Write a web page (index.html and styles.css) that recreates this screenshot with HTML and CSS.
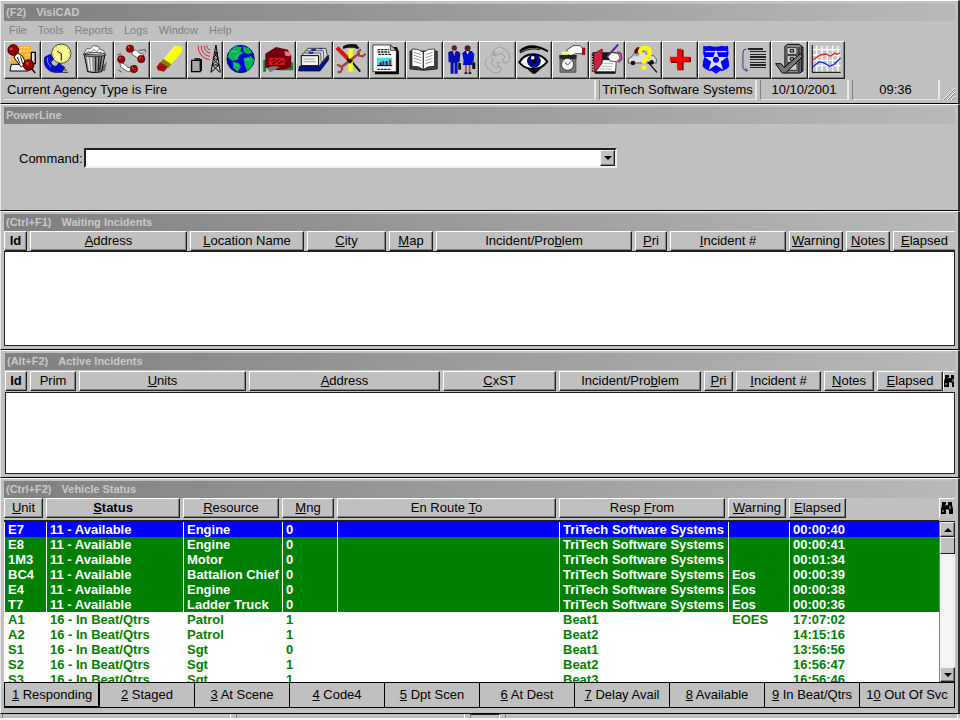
FILE: index.html
```
<!DOCTYPE html>
<html lang="en">
<head>
<meta charset="UTF-8">
<meta name="viewport" content="width=device-width, initial-scale=1.0">
<title>VisiCAD</title>
<link rel="stylesheet" href="styles.css">
</head>
<body>

<!-- Main window -->
<header class="window">
  <h1 class="title-bar"><span>(F2)</span><span>VisiCAD</span></h1>
  <nav class="menu">
    <button>File</button>
    <button>Tools</button>
    <button>Reports</button>
    <button>Logs</button>
    <button>Window</button>
    <button>Help</button>
  </nav>
  <div class="toolbar">
    <button aria-label="Emergency call">
      <svg viewBox="0 0 102 102"><path fill="#ffb030" d="M26 8h50l8 22v32H16V24z"/><path stroke="#fff080" stroke-width="4" stroke-dasharray="5 5" d="M36 14h40M34 24h46M12 40l14-6M12 52l14-4M60 36h22"/><path fill="#eee" stroke="#000" stroke-width="3" d="M18 64h50v20H14z"/><path fill="#ddd" stroke="#000" stroke-width="4" d="M78 28h12v34H78z"/><path fill="#fff" stroke="#000" stroke-width="3" d="M34 28l18 12 10 20-14 12-22-28z"/><path stroke="#222" stroke-width="3" d="M36 42l8 20M46 40l6 22"/><circle cx="24" cy="21" r="16" fill="#900000" stroke="#300" stroke-width="3"/><circle cx="70" cy="66" r="16" fill="#900000" stroke="#300" stroke-width="3"/><path stroke="#000" stroke-width="4" d="M80 78l10 12"/><path fill="#e04040" d="M14 14h8v7h-8zM62 58h8v7h-8z"/></svg>
    </button>
    <button aria-label="Scheduled call">
      <svg viewBox="0 0 102 102"><circle cx="57" cy="32" r="29" fill="#ffff90" stroke="#000" stroke-width="2"/><circle cx="57" cy="32" r="24" fill="none" stroke="#a08020" stroke-width="3" stroke-dasharray="3 9"/><path fill="none" stroke="#000" stroke-width="3" d="M45 25l12 7v20"/><path fill="#0010d0" stroke="#000060" stroke-width="2" d="M8 42l16-8 10 14-8 10c2 8 8 12 16 12l8-10 18 14-8 12c-32 10-62-10-52-44z"/><path stroke="#70a0ff" stroke-width="3" d="M16 44v14l10 14"/><path stroke="#333" stroke-width="3" d="M56 88h22M66 81h8"/></svg>
    </button>
    <button aria-label="Trash">
      <svg viewBox="0 0 102 102"><path fill="#666" d="M62 84h18l6-30z"/><path fill="#999" stroke="#000" stroke-width="3" d="M18 34h62l-10 52q-22 6-42 0z"/><path stroke="#222" stroke-width="4" d="M52 40v46M62 40l-2 44M70 40l-6 42"/><path stroke="#eee" stroke-width="4" d="M28 40l6 42M38 40l3 44"/><path fill="#fff" stroke="#222" stroke-width="2" d="M16 34l10-18 10 2 8-10 16 2 6 10 10 2 4 14z"/><path fill="none" stroke="#555" stroke-width="2" d="M28 22l10 8 8-12 10 8 6-10M22 32l8-6M64 32l6-6"/><ellipse cx="49" cy="35" rx="34" ry="6" fill="none" stroke="#333" stroke-width="3"/></svg>
    </button>
    <button aria-label="Transfer calls">
      <svg viewBox="0 0 102 102"><path fill="#fff" stroke="#222" stroke-width="2" d="M50 26l12-6 10 10 14 4-4 14-16-4-16-10zM14 58l12 4 12 12 14-2-2 12-12 2-22-14z"/><g fill="#a00000" stroke="#300" stroke-width="2"><circle cx="44" cy="17" r="11"/><circle cx="78" cy="48" r="11"/><circle cx="18" cy="49" r="11"/><circle cx="56" cy="78" r="11"/></g><g fill="#e05050"><circle cx="40" cy="13" r="3"/><circle cx="74" cy="44" r="3"/><circle cx="14" cy="45" r="3"/><circle cx="52" cy="74" r="3"/></g><path stroke="#222" stroke-width="2" d="M70 22l20-2 2 8M6 36l12-4M8 80l12 8"/></svg>
    </button>
    <button aria-label="Erase">
      <svg viewBox="0 0 102 102"><path fill="#ffff00" d="M38 48L72 8l22 4-2 14-32 38z"/><path fill="#808000" d="M36 48l24 16-8 10-26-14z"/><path fill="#a01010" d="M26 58l24 14-12 14-18-4-4-10z"/><path stroke="#fff" stroke-width="2" d="M40 46l32-38"/></svg>
    </button>
    <button aria-label="Radio tower">
      <svg viewBox="0 0 102 102"><path fill="#aaa" stroke="#000" stroke-width="4" d="M10 52h26v34H10z"/><path fill="#000" d="M36 48h5v36h-5zM18 46h18v4H18z"/><path fill="none" stroke="#e02020" stroke-width="3" d="M56 8a10 10 0 0 0 10 12M48 8a20 20 0 0 0 18 22M39 8a29 29 0 0 0 26 32M30 8a38 38 0 0 0 34 42"/><path fill="none" stroke="#000" stroke-width="3" d="M83 6L68 88M83 6l13 82M78 28h10M74 48h16M70 66h24M78 28l12 20-18 18 22 22M88 28L74 48l18 18-24 22"/></svg>
    </button>
    <button aria-label="Map">
      <svg viewBox="0 0 102 102"><circle cx="49" cy="48" r="41" fill="#0000e0" stroke="#002040" stroke-width="3"/><path fill="#10b050" d="M16 24l18-14 20 2-6 12 10 6-14 8-4 12-16 4-14-12zM56 10l18 6 10 14-14 4-12-8zM58 46l22-6 10 10-8 24-14 10-6-16zM26 56l18 4 6 12-10 14-14-12z"/><path stroke="#20e0a0" stroke-width="3" d="M22 26h18M34 44l12-12M64 50h16M32 62l10 8"/></svg>
    </button>
    <button aria-label="Station">
      <svg viewBox="0 0 102 102"><path fill="#108030" d="M6 50h8v36H6zM54 82h42V58h-6v18H54z"/><path fill="#700010" d="M12 32l32-20 36 8 10 20v34l-40 8-38-8z"/><path fill="#e01010" d="M24 44h46v24H22z"/><path stroke="#400" stroke-width="4" d="M30 54l12-6M34 62l20-12M50 62l16-8"/><path fill="#ff7080" d="M70 24l18 4-2 12-14-2z"/><path fill="#777" d="M18 76l20-10 18 6-30 16z"/><path stroke="#000" stroke-width="3" d="M20 68h46"/></svg>
    </button>
    <button aria-label="Card file">
      <svg viewBox="0 0 102 102"><path fill="#0010a0" stroke="#000" stroke-width="2" d="M6 70h60l28-34v14L68 84H4z"/><path fill="#ddd" stroke="#000" stroke-width="2" d="M14 36l18-20h54l4 22-24 30z"/><path fill="#f4f4f4" stroke="#000" stroke-width="3" d="M12 38h52v30H12z"/><path fill="none" stroke="#222" stroke-width="2" d="M20 30h50l2 32M26 23h52l2 32"/><path fill="#1020b0" d="M42 17h14v6H42zM34 26h14v6H34zM66 15h10v4H66z"/><path stroke="#777" stroke-width="2" d="M18 48h34M18 56h38"/></svg>
    </button>
    <button aria-label="Tools">
      <svg viewBox="0 0 102 102"><path stroke="#111" stroke-width="6" d="M44 46l34 40"/><path stroke="#e01010" stroke-width="12" d="M8 14l34 34"/><path stroke="#ffff00" stroke-width="13" d="M49 18v68"/><path fill="#111" d="M26 10q14-10 40-6l10 12-8 2-8-4H40l-14 4z"/><path fill="none" stroke="#a04040" stroke-width="8" d="M22 72l54-42"/><path fill="none" stroke="#a04040" stroke-width="6" d="M80 20l-8 6 2 12 12 2 8-8M8 66l10 2 6 10-6 10-8-2"/><path fill="#111" d="M38 44l18 8-8 10-10-8z"/></svg>
    </button>
    <button aria-label="Report">
      <svg viewBox="0 0 102 102"><path fill="#000" d="M14 12h66l6 14v68H14z"/><path fill="#fff" stroke="#000" stroke-width="2" d="M8 6h52l18 16v64H8z"/><path fill="#bbb" stroke="#000" stroke-width="2" d="M60 6v16h18z"/><path stroke="#222" stroke-width="4" stroke-dasharray="8 2" d="M22 20h34M22 27h36M24 34h38M22 79h40"/><path fill="#40e0e0" d="M20 44h46v24H20z"/><path fill="#0020a0" d="M28 58h6v10h-6zM46 54h6v14h-6z"/><path fill="#d01010" d="M36 54h6v14h-6zM56 50h6v18h-6z"/><path stroke="#000" stroke-width="3" d="M20 68h46"/></svg>
    </button>
    <button aria-label="Reference book">
      <svg viewBox="0 0 102 102"><path fill="#444" stroke="#000" stroke-width="2" d="M8 24h82v54l-40 4-42-4z"/><path fill="#fff" stroke="#000" stroke-width="2" d="M14 18q20-2 34 10 14-12 34-10v52q-20-2-34 10-14-12-34-10z"/><path stroke="#000" stroke-width="3" d="M48 28v52"/><path stroke="#666" stroke-width="2" d="M20 28l22 7M20 37l22 7M20 46l22 7M20 55l22 7M54 35l22-7M54 44l22-7M54 53l22-7M54 62l22-7"/></svg>
    </button>
    <button aria-label="Personnel">
      <svg viewBox="0 0 102 102"><path fill="#0010b0" d="M12 28l8-4h20l8 6-2 28h-6v34H31V60h-3v32h-9V58h-6z"/><path fill="#0010c8" d="M54 30l8-6h20l8 8-2 24h-4l2 10H56l2-12z"/><circle cx="30" cy="15" r="8" fill="#602020"/><circle cx="70" cy="16" r="9" fill="#502020"/><path fill="#fff" d="M26 25h8l-4 14zM66 25h8l-4 10z"/><path stroke="#d01010" stroke-width="2" d="M30 27v10"/><path stroke="#a05040" stroke-width="5" d="M65 66v24M76 66v24"/><path fill="#111" d="M42 60h8v20h-8zM84 58h9v20h-9zM61 88h8v5h-8zM73 88h8v5h-8z"/></svg>
    </button>
    <button aria-label="Redial" disabled>
      <svg viewBox="0 0 102 102"><path fill="none" stroke="#8a8a8a" stroke-width="2" d="M42 22l10-8 16 2 16 12 6 18-8 12-12 2-4-10 8-8-10-12-10 4-10 4zM18 48l12-6 8 8-6 12 14 14 10-6 8 6-4 10-18 4-20-14-8-14z"/><path fill="none" stroke="#8a8a8a" stroke-width="2" d="M34 28l8 8M38 24l2 12-10 0M60 60l-8-2 2 12"/><path fill="none" stroke="#e4e4e4" stroke-width="2" d="M45 25l9-8 14 2M21 51l11-6"/></svg>
    </button>
    <button aria-label="View">
      <svg viewBox="0 0 102 102"><path fill="#000" d="M6 22Q40-8 92 22v6Q46 2 8 28z"/><path stroke="#000" stroke-width="3" d="M8 30q30-18 60-10"/><path fill="#fff" stroke="#000" stroke-width="6" d="M6 58q14-24 42-24 26 0 42 22-16 22-42 22Q22 78 6 58z"/><circle cx="50" cy="54" r="19" fill="#0000b0" stroke="#000" stroke-width="3"/><circle cx="51" cy="52" r="9" fill="#000"/><path fill="#fff" d="M42 40h9v9h-9z"/><path fill="#000" d="M28 76q20 10 46-2L54 92h-8z"/></svg>
    </button>
    <button aria-label="Time stamp">
      <svg viewBox="0 0 102 102"><path fill="#fff" stroke="#000" stroke-width="2" d="M42 20l18-12h20l8 8v16H68l-16 6-12-8z"/><path fill="#a01020" d="M86 14h10v22H86z"/><path fill="#ffff60" d="M26 26h22v8H26z"/><path fill="#222" d="M18 36h52v12H18z"/><path fill="#777" stroke="#444" stroke-width="2" d="M20 48h48v40H20z"/><circle cx="43" cy="64" r="18" fill="#fff" stroke="#000" stroke-width="2"/><path fill="none" stroke="#2030d0" stroke-width="3" d="M34 58l9 8 10-10"/></svg>
    </button>
    <button aria-label="Write log">
      <svg viewBox="0 0 102 102"><path fill="#111" d="M6 28h70v64H14z"/><path fill="#d02040" stroke="#500" stroke-width="2" d="M10 32l26-14v52L12 88z"/><path fill="#fff" stroke="#000" stroke-width="2" d="M36 50h42l-2 36H16l20-26z"/><path stroke="#888" stroke-width="2" d="M40 62h28M34 70h32M28 78h36"/><path fill="#fff" stroke="#000" stroke-width="2" d="M50 38l14-10 20 4 6 14-12 10-18-2z"/><path fill="none" stroke="#a02080" stroke-width="5" d="M80 26l12 6 2 16-10 10"/><path stroke="#602080" stroke-width="6" d="M84 4L48 44"/><path stroke="#111" stroke-width="5" stroke-dasharray="4 4" d="M7 34v54"/></svg>
    </button>
    <button aria-label="Find vehicle">
      <svg viewBox="0 0 102 102"><path fill="#ddd" stroke="#222" stroke-width="2" d="M6 48l12-8 8-14h28l10 12h18l8 10v12H6z"/><path fill="#8ab" d="M28 30h10v10H22zM56 40h14v8H56z"/><circle cx="20" cy="60" r="7" fill="#111"/><circle cx="76" cy="58" r="7" fill="#111"/><path fill="#600" d="M24 22l10-10 14 4-6 14-16 2z"/><path stroke="#000" stroke-width="4" d="M64 56l28 32"/><path fill="none" stroke="#ffff00" stroke-width="12" d="M40 30q2-17 16-16 18 2 15 18-2 8-12 14-6 4-6 16"/><path fill="#ffff00" d="M46 68h14v12H46z"/></svg>
    </button>
    <button aria-label="Medical">
      <svg viewBox="0 0 102 102"><path fill="#700" d="M43 20h18v22h22v16H61v24H43V60H23V42h20z"/><path fill="#f00" d="M41 17h15v24h23v14H56v24H41V55H20V41h21z"/></svg>
    </button>
    <button aria-label="Police">
      <svg viewBox="0 0 102 102"><path fill="#0000ff" d="M12 8q10 4 18 0 18 6 38 0 8 4 18 0l2 26q-6 8 0 18l2 18q-10 14-28 14L50 92 38 84q-18 0-28-14l2-18q6-10 0-18z"/><path fill="none" stroke="#fff" stroke-width="3" d="M18 26h64"/><path fill="#dde" d="M50 20l8 22h26L64 56l8 24-22-14-22 14 8-24-20-14h26z"/><circle cx="50" cy="50" r="9" fill="#0000ff"/></svg>
    </button>
    <button aria-label="List">
      <svg viewBox="0 0 102 102"><path fill="none" stroke="#334090" stroke-width="3" d="M30 18q-10 0-10 12v44q0 8 12 8M26 76l8 6-6 4"/><path shape-rendering="crispEdges" stroke="#222" stroke-width="4" d="M36 18h44M40 26h48M40 34h48M40 42h48M40 50h48M40 58h48M40 66h48M40 74h48"/></svg>
    </button>
    <button aria-label="File check">
      <svg viewBox="0 0 102 102"><path fill="#888" stroke="#000" stroke-width="3" d="M38 10l8-6h34l12 8v72l-10 6H38z"/><path fill="#ccc" stroke="#000" stroke-width="2" d="M44 14h30v20H44zM44 38h30v20H44zM44 62h30v20H44z"/><path fill="none" stroke="#000" stroke-width="3" d="M54 20h10v7H54zM54 44h10v7H54zM80 12v76M87 12v74"/><path fill="#777" stroke="#000" stroke-width="3" d="M10 62h16l10 12L84 32l8 8-52 50H30z"/></svg>
    </button>
    <button aria-label="Charts">
      <svg viewBox="0 0 102 102"><path fill="#c8c8c8" d="M10 8h84v80H10z"/><path stroke="#fff" stroke-width="4" d="M22 8v78M38 8v78M54 8v78M70 8v78M86 8v78M8 20h86M8 36h86M8 52h86M8 68h86"/><path fill="none" stroke="#000" stroke-width="3" d="M9 6v82h85"/><path fill="none" stroke="#f02020" stroke-width="4" d="M10 52l22-16 18-3 14 6 12-8 8 3 8-4"/><path fill="none" stroke="#1020f0" stroke-width="4" d="M10 72l20-16 16 4 14 10 12-4 22-20"/></svg>
    </button>
  </div>
  <div class="status-bar">
    <span class="status-text">Current Agency Type is Fire</span>
    <span class="status-company">TriTech Software Systems</span>
    <span class="status-date">10/10/2001</span>
    <span class="status-time">09:36</span>
    <svg class="grip" viewBox="0 0 12 12"><path stroke="#fff" d="M0 12L12 0M4 12l8-8M8 12l4-4"/><path stroke="#808080" d="M1 12L12 1M5 12l7-7M9 12l3-3"/></svg>
  </div>
</header>

<!-- Command line -->
<section class="window powerline">
  <h2 class="title-bar"><span>PowerLine</span></h2>
  <form class="command">
    <label for="command">Command:</label>
    <div class="combo">
      <select id="command"><option></option></select>
      <span class="combo-arrow arrow-down"></span>
    </div>
  </form>
</section>

<section class="window waiting">
  <h2 class="title-bar"><span>(Ctrl+F1)</span><span>Waiting Incidents</span></h2>
  <table>
    <colgroup>
      <col class="w-id"><col class="w-address"><col class="w-location"><col class="w-city"><col class="w-map"><col class="w-problem"><col class="w-pri"><col class="w-incident"><col class="w-warning"><col class="w-notes"><col class="w-elapsed">
    </colgroup>
    <thead>
      <tr>
        <th><button class="sorted">Id</button></th>
        <th><button><u>A</u>ddress</button></th>
        <th><button><u>L</u>ocation Name</button></th>
        <th><button><u>C</u>ity</button></th>
        <th><button><u>M</u>ap</button></th>
        <th><button>Incident/Pro<u>b</u>lem</button></th>
        <th><button><u>P</u>ri</button></th>
        <th><button><u>I</u>ncident #</button></th>
        <th><button><u>W</u>arning</button></th>
        <th><button><u>N</u>otes</button></th>
        <th><button><u>E</u>lapsed</button></th>
      </tr>
    </thead>
    <tbody>
      <tr><td class="empty" colspan="11"></td></tr>
    </tbody>
  </table>
</section>

<section class="window active">
  <h2 class="title-bar"><span>(Alt+F2)</span><span>Active Incidents</span></h2>
  <table>
    <colgroup>
      <col class="a-id"><col class="a-prim"><col class="a-units"><col class="a-address"><col class="a-cross"><col class="a-problem"><col class="a-pri"><col class="a-incident"><col class="a-notes"><col class="a-elapsed"><col class="a-find">
    </colgroup>
    <thead>
      <tr>
        <th><button class="sorted">Id</button></th>
        <th><button>Prim</button></th>
        <th><button><u>U</u>nits</button></th>
        <th><button><u>A</u>ddress</button></th>
        <th><button><u>C</u>xST</button></th>
        <th><button>Incident/Pro<u>b</u>lem</button></th>
        <th><button><u>P</u>ri</button></th>
        <th><button><u>I</u>ncident #</button></th>
        <th><button><u>N</u>otes</button></th>
        <th><button><u>E</u>lapsed</button></th>
        <th><button class="find" aria-label="Find"><svg viewBox="0 0 12 14"><path d="M1 1h4v3h2V1h4v3l1 4v5H8V9L6 8 5 9v4H0V8l1-4z"/><path stroke="#c0c0c0" d="M2 9v2M9 5v3M4 4h1"/></svg></button></th>
      </tr>
    </thead>
    <tbody>
      <tr><td class="empty" colspan="11"></td></tr>
    </tbody>
  </table>
</section>

<section class="window vehicles">
  <h2 class="title-bar"><span>(Ctrl+F2)</span><span>Vehicle Status</span></h2>
  <div class="vehicle-list">
    <div class="vehicle-view">
      <table>
        <colgroup>
          <col class="v-unit"><col class="v-status"><col class="v-resource"><col class="v-mng"><col class="v-route"><col class="v-from"><col class="v-warning"><col class="v-elapsed"><col class="v-rest">
        </colgroup>
        <thead>
          <tr>
            <th><button><u>U</u>nit</button></th>
            <th><button class="sorted"><u>S</u>tatus</button></th>
            <th><button><u>R</u>esource</button></th>
            <th><button><u>M</u>ng</button></th>
            <th><button>En Route <u>T</u>o</button></th>
            <th><button>Resp <u>F</u>rom</button></th>
            <th><button><u>W</u>arning</button></th>
            <th><button><u>E</u>lapsed</button></th>
            <th></th>
          </tr>
        </thead>
        <tbody>
          <tr class="available selected"><td>E7</td><td>11 - Available</td><td>Engine</td><td>0</td><td></td><td>TriTech Software Systems</td><td></td><td colspan="2">00:00:40</td></tr>
          <tr class="available"><td>E8</td><td>11 - Available</td><td>Engine</td><td>0</td><td></td><td>TriTech Software Systems</td><td></td><td colspan="2">00:00:41</td></tr>
          <tr class="available"><td>1M3</td><td>11 - Available</td><td>Motor</td><td>0</td><td></td><td>TriTech Software Systems</td><td></td><td colspan="2">00:01:34</td></tr>
          <tr class="available"><td>BC4</td><td>11 - Available</td><td>Battalion Chief</td><td>0</td><td></td><td>TriTech Software Systems</td><td>Eos</td><td colspan="2">00:00:39</td></tr>
          <tr class="available"><td>E4</td><td>11 - Available</td><td>Engine</td><td>0</td><td></td><td>TriTech Software Systems</td><td>Eos</td><td colspan="2">00:00:38</td></tr>
          <tr class="available"><td>T7</td><td>11 - Available</td><td>Ladder Truck</td><td>0</td><td></td><td>TriTech Software Systems</td><td>Eos</td><td colspan="2">00:00:36</td></tr>
          <tr><td>A1</td><td>16 - In Beat/Qtrs</td><td>Patrol</td><td>1</td><td></td><td>Beat1</td><td>EOES</td><td colspan="2">17:07:02</td></tr>
          <tr><td>A2</td><td>16 - In Beat/Qtrs</td><td>Patrol</td><td>1</td><td></td><td>Beat2</td><td></td><td colspan="2">14:15:16</td></tr>
          <tr><td>S1</td><td>16 - In Beat/Qtrs</td><td>Sgt</td><td>0</td><td></td><td>Beat1</td><td></td><td colspan="2">13:56:56</td></tr>
          <tr><td>S2</td><td>16 - In Beat/Qtrs</td><td>Sgt</td><td>1</td><td></td><td>Beat2</td><td></td><td colspan="2">16:56:47</td></tr>
          <tr><td>S3</td><td>16 - In Beat/Qtrs</td><td>Sgt</td><td>1</td><td></td><td>Beat3</td><td></td><td colspan="2">16:56:46</td></tr>
        </tbody>
      </table>
    </div>
    <div class="side">
      <button class="find" aria-label="Find"><svg viewBox="0 0 12 14"><path d="M1 1h4v3h2V1h4v3l1 4v5H8V9L6 8 5 9v4H0V8l1-4z"/><path stroke="#c0c0c0" d="M2 9v2M9 5v3M4 4h1"/></svg></button>
      <div class="scrollbar">
        <button class="arrow-up" aria-label="Scroll up"></button>
        <div class="thumb"></div>
        <button class="arrow-down" aria-label="Scroll down"></button>
      </div>
    </div>
  </div>
  <div class="status-buttons">
    <button class="default"><u>1</u> Responding</button>
    <button><u>2</u> Staged</button>
    <button><u>3</u> At Scene</button>
    <button><u>4</u> Code4</button>
    <button><u>5</u> Dpt Scen</button>
    <button><u>6</u> At Dest</button>
    <button><u>7</u> Delay Avail</button>
    <button><u>8</u> Available</button>
    <button><u>9</u> In Beat/Qtrs</button>
    <button>1<u>0</u> Out Of Svc</button>
  </div>
</section>

<footer class="taskbar"><span></span><span></span><span></span><span></span></footer>

</body>
</html>
```
FILE: styles.css
```
/* General */
* {
  box-sizing: border-box;
}

body {
  display: flex;
  flex-direction: column;
  height: 100vh;
  margin: 0;
  overflow: hidden;
  background-color: #c0c0c0;
  color: #000;
  font-family: "Liberation Sans", Arial, sans-serif;
  font-size: 13px;
}

button, select {
  font: inherit;
  color: inherit;
  margin: 0;
  padding: 0;
  border-radius: 0;
  background-color: #c0c0c0;
}

/* Windows */
.window {
  flex: none;
  padding: 2px 3px 3px 3px;
  border-top: 1px solid #fff;
  border-left: 1px solid #e8e8e8;
  border-right: 2px solid #303030;
  border-bottom: 1px solid #000;
}

.title-bar {
  display: flex;
  gap: 10px;
  height: 17px;
  margin: 0;
  padding-left: 2px;
  background: linear-gradient(to right, #808080, #b8b8b8);
  color: #c8c8c8;
  font-size: 11px;
  line-height: 17px;
}

/* Menu and toolbar */
header.window {
  padding-top: 3px;
}

.menu {
  display: flex;
  align-items: flex-start;
  gap: 11px;
  height: 20px;
  padding-left: 5px;
}

.menu button {
  border: 0;
  color: #808080;
  font-size: 11px;
  line-height: 18px;
}

.toolbar {
  display: flex;
  width: 88.4%;
}

.toolbar button {
  flex: 1;
  min-width: 0;
  height: 38px;
  border: 1px solid;
  border-color: #fff #202020 #202020 #fff;
  box-shadow: inset -1px -1px #808080;
}

.toolbar svg {
  display: block;
  width: 100%;
  height: 34px;
  fill: none;
}

.status-bar {
  display: flex;
  gap: 3px;
  height: 20px;
  margin-top: 1px;
  line-height: 20px;
}

.status-bar span {
  border-right: 2px solid #e8e8e8;
  border-bottom: 1px solid #e8e8e8;
  border-left: 1px solid #808080;
  text-align: center;
}

.status-bar .status-text {
  flex: 1;
  padding-left: 3px;
  border-left: 0;
  text-align: left;
}

.status-company {
  width: 158px;
}

.status-date {
  width: 89px;
}

.status-time {
  width: 88px;
}

.grip {
  align-self: flex-end;
  width: 12px;
  height: 12px;
}

/* PowerLine */
.powerline {
  height: 107px;
}

.command {
  display: flex;
  align-items: center;
  gap: 1px;
  padding: 24px 0 0 15px;
}

.combo {
  display: flex;
  width: 57%;
  height: 20px;
  border: 2px solid;
  border-color: #202020 #f0f0f0 #f0f0f0 #202020;
  background-color: #fff;
}

.combo select {
  flex: 1;
  appearance: none;
  border: 0;
  background-color: #fff;
}

.combo-arrow {
  width: 15px;
}

/* Small raised arrow buttons */
.arrow-up, .arrow-down {
  display: flex;
  align-items: center;
  justify-content: center;
  border: 1px solid;
  border-color: #f0f0f0 #202020 #202020 #f0f0f0;
  box-shadow: inset -1px -1px #808080;
  background-color: #c0c0c0;
}

.arrow-up::before, .arrow-down::before {
  content: "";
  border: 4px solid transparent;
}

.arrow-up::before {
  border-top: 0;
  border-bottom-color: #000;
}

.arrow-down::before {
  border-bottom: 0;
  border-top-color: #000;
}

/* Column headings */
table {
  width: 100%;
  table-layout: fixed;
  border-collapse: separate;
  border-spacing: 0;
}

th {
  padding: 0 3px 0 0;
  font-weight: normal;
}

th:last-child {
  padding-right: 0;
}

th button {
  display: block;
  width: 100%;
  height: 20px;
  overflow: hidden;
  border: 1px solid;
  border-color: #fff #202020 #202020 #fff;
  box-shadow: inset -1px -1px #808080;
  line-height: 18px;
  white-space: nowrap;
}

.waiting th:last-child button {
  border-right: 0;
  box-shadow: inset 0 -1px #808080;
}

.sorted {
  font-weight: bold;
}

.find {
  display: block;
  border: 1px solid;
  border-color: #fff #c0c0c0 #c0c0c0 #fff;
  box-shadow: none;
}

.find svg {
  display: block;
  width: 12px;
  height: 14px;
  margin: auto;
}

.empty {
  padding: 0;
  border: 1px solid #202020;
  background-color: #fff;
}

.waiting .empty {
  height: 95px;
}

.active .empty {
  height: 82px;
}

.active {
  padding-left: 4px;
}

.waiting, .active {
  padding-bottom: 3px;
}

.active th {
  padding-top: 1px;
  padding-bottom: 1px;
}

.active th:nth-last-child(2) {
  padding-right: 0;
}

/* Waiting incidents columns */
.w-id { width: 26px; }
.w-address { width: 160px; }
.w-location { width: 117px; }
.w-city { width: 82px; }
.w-map { width: 47px; }
.w-problem { width: 199px; }
.w-pri { width: 35px; }
.w-incident { width: 119px; }
.w-warning { width: 57px; }
.w-notes { width: 47px; }
.w-elapsed { width: 62px; }

/* Active incidents columns */
.a-id { width: 25px; }
.a-prim { width: 49px; }
.a-units { width: 170px; }
.a-address { width: 194px; }
.a-cross { width: 116px; }
.a-problem { width: 145px; }
.a-pri { width: 32px; }
.a-incident { width: 88px; }
.a-notes { width: 53px; }
.a-elapsed { width: 66px; }
.a-find { width: 12px; }

/* Vehicle status columns */
.v-unit { width: 42px; }
.v-status { width: 137px; }
.v-resource { width: 99px; }
.v-mng { width: 55px; }
.v-route { width: 222px; }
.v-from { width: 169px; }
.v-warning { width: 61px; }
.v-elapsed { width: 60px; }
.v-rest { width: 90px; }

/* Vehicle status */
.vehicles {
  display: flex;
  flex: 1;
  flex-direction: column;
  min-height: 0;
  padding-bottom: 5px;
}

.vehicles .title-bar {
  flex: none;
}

.vehicle-list {
  display: flex;
  flex: 1;
  min-height: 0;
}

.vehicle-view {
  flex: 1;
  overflow: hidden;
  background-color: #fff;
}

.vehicles th {
  padding-bottom: 2px;
  border-bottom: 2px solid #202020;
  background-color: #c0c0c0;
}

.vehicles td {
  height: 15px;
  padding: 0 0 0 3px;
  border-left: 1px solid transparent;
  color: #008000;
  font-weight: bold;
  line-height: 15px;
  white-space: nowrap;
}

.vehicles .available td {
  border-left-color: #fff;
  background-color: #008000;
  color: #fff;
}

.vehicles .selected td {
  background-color: #0000ff;
}

.side {
  display: flex;
  flex-direction: column;
  gap: 3px;
  width: 16px;
}

.side .find {
  height: 20px;
}

.scrollbar {
  display: flex;
  flex: 1;
  flex-direction: column;
  border-top: 1px solid #202020;
  border-left: 1px solid #808080;
  background-color: #f4f4f4;
}

.scrollbar button {
  height: 15px;
}

.thumb {
  height: 17px;
  margin-bottom: auto;
  border: 1px solid;
  border-color: #f0f0f0 #202020 #202020 #f0f0f0;
  background-color: #c0c0c0;
}

.status-buttons {
  display: flex;
  border: 1px solid #000;
  border-right: 0;
}

.status-buttons button {
  flex: 1;
  height: 24px;
  padding-bottom: 2px;
  border: 0;
  border-right: 1px solid #000;
  white-space: nowrap;
}

.status-buttons .default {
  box-shadow: inset -1px -1px #000;
}

/* Top edge of the status bar behind the windows */
.taskbar {
  display: flex;
  flex: none;
  gap: 5px;
  height: 6px;
  padding: 0 2px;
  border-bottom: 2px solid #f4f4f4;
}

.taskbar span {
  width: 229px;
  border-left: 1px solid #808080;
  border-right: 1px solid #fff;
}

.taskbar span:nth-child(3) {
  width: 30px;
  border-top: 1px solid #202020;
}

.taskbar span:last-child {
  flex: 1;
}
```
